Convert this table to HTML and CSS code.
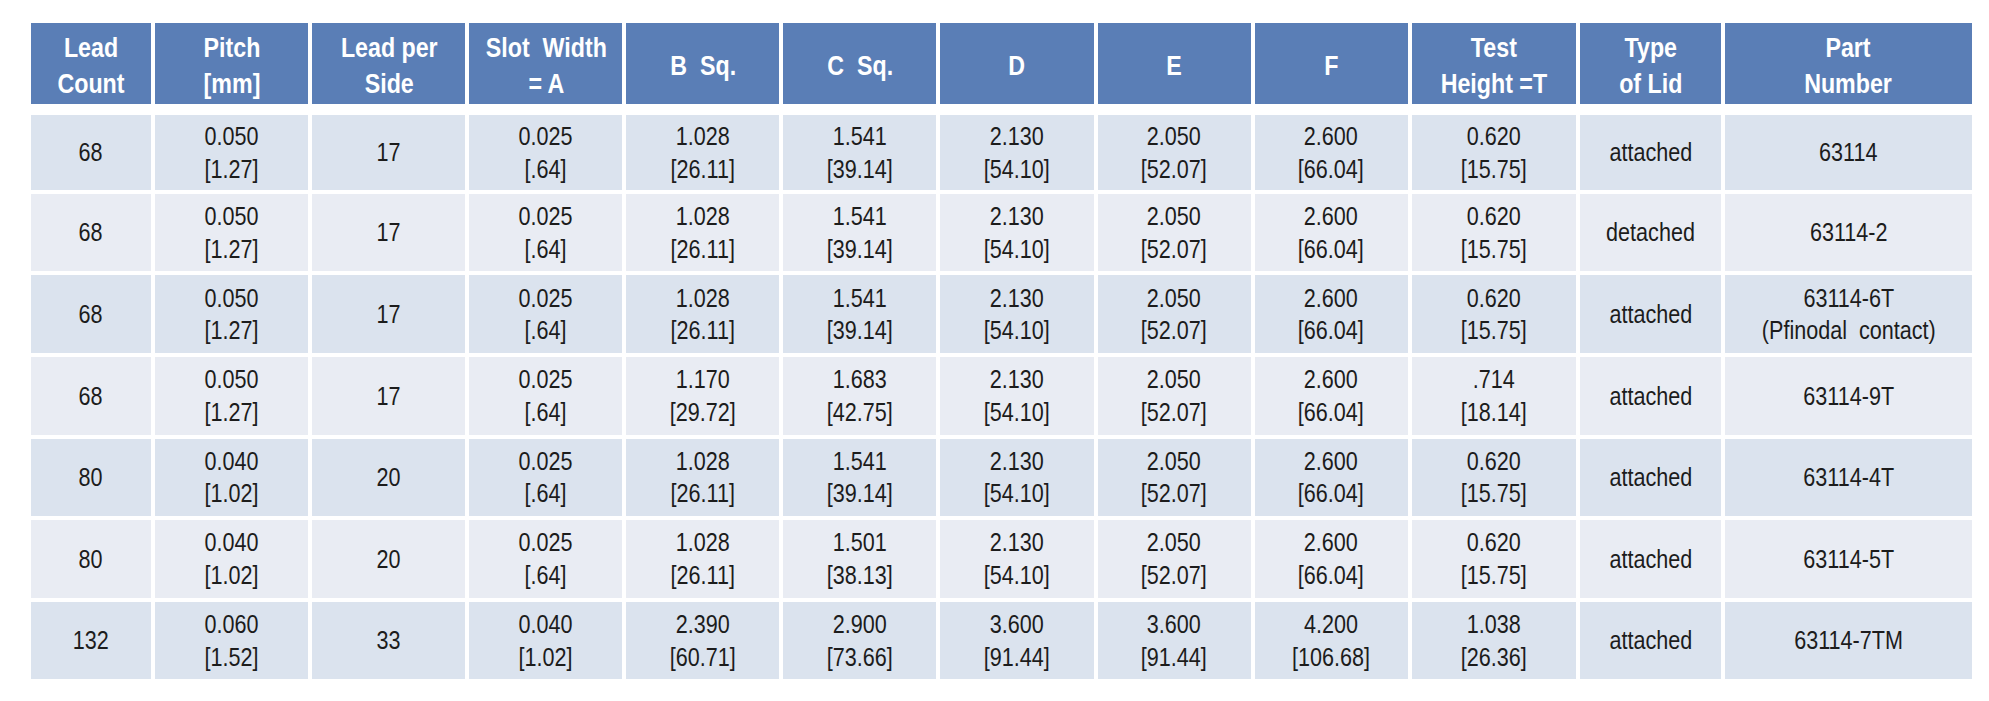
FILE: index.html
```html
<!DOCTYPE html>
<html>
<head>
<meta charset="utf-8">
<link rel="stylesheet" href="styles.css">
</head>
<body>
<table class="spec">
  <colgroup>
    <col class="c-lead"><col class="c-std"><col class="c-std"><col class="c-std"><col class="c-std"><col class="c-std"><col class="c-std"><col class="c-std"><col class="c-std"><col class="c-test"><col class="c-lid"><col class="c-part">
  </colgroup>
  <thead>
    <tr class="head">
      <th><span class="t">Lead<br>Count</span></th>
      <th><span class="t">Pitch<br>[mm]</span></th>
      <th><span class="t">Lead per<br>Side</span></th>
      <th><span class="t">Slot&nbsp; Width<br>= A</span></th>
      <th><span class="t">B&nbsp; Sq.</span></th>
      <th><span class="t">C&nbsp; Sq.</span></th>
      <th><span class="t">D</span></th>
      <th><span class="t">E</span></th>
      <th><span class="t">F</span></th>
      <th><span class="t">Test<br>Height&nbsp;=T</span></th>
      <th><span class="t">Type<br>of Lid</span></th>
      <th><span class="t">Part<br>Number</span></th>
    </tr>
  </thead>
  <tbody>
    <tr class="first">
      <td><span class="t">68</span></td><td><span class="t">0.050<br>[1.27]</span></td><td><span class="t">17</span></td><td><span class="t">0.025<br>[.64]</span></td><td><span class="t">1.028<br>[26.11]</span></td><td><span class="t">1.541<br>[39.14]</span></td><td><span class="t">2.130<br>[54.10]</span></td><td><span class="t">2.050<br>[52.07]</span></td><td><span class="t">2.600<br>[66.04]</span></td><td><span class="t">0.620<br>[15.75]</span></td><td><span class="t">attached</span></td><td><span class="t">63114</span></td>
    </tr>
    <tr>
      <td><span class="t">68</span></td><td><span class="t">0.050<br>[1.27]</span></td><td><span class="t">17</span></td><td><span class="t">0.025<br>[.64]</span></td><td><span class="t">1.028<br>[26.11]</span></td><td><span class="t">1.541<br>[39.14]</span></td><td><span class="t">2.130<br>[54.10]</span></td><td><span class="t">2.050<br>[52.07]</span></td><td><span class="t">2.600<br>[66.04]</span></td><td><span class="t">0.620<br>[15.75]</span></td><td><span class="t">detached</span></td><td><span class="t">63114-2</span></td>
    </tr>
    <tr>
      <td><span class="t">68</span></td><td><span class="t">0.050<br>[1.27]</span></td><td><span class="t">17</span></td><td><span class="t">0.025<br>[.64]</span></td><td><span class="t">1.028<br>[26.11]</span></td><td><span class="t">1.541<br>[39.14]</span></td><td><span class="t">2.130<br>[54.10]</span></td><td><span class="t">2.050<br>[52.07]</span></td><td><span class="t">2.600<br>[66.04]</span></td><td><span class="t">0.620<br>[15.75]</span></td><td><span class="t">attached</span></td><td><span class="t">63114-6T<br>(Pfinodal&nbsp; contact)</span></td>
    </tr>
    <tr>
      <td><span class="t">68</span></td><td><span class="t">0.050<br>[1.27]</span></td><td><span class="t">17</span></td><td><span class="t">0.025<br>[.64]</span></td><td><span class="t">1.170<br>[29.72]</span></td><td><span class="t">1.683<br>[42.75]</span></td><td><span class="t">2.130<br>[54.10]</span></td><td><span class="t">2.050<br>[52.07]</span></td><td><span class="t">2.600<br>[66.04]</span></td><td><span class="t">.714<br>[18.14]</span></td><td><span class="t">attached</span></td><td><span class="t">63114-9T</span></td>
    </tr>
    <tr>
      <td><span class="t">80</span></td><td><span class="t">0.040<br>[1.02]</span></td><td><span class="t">20</span></td><td><span class="t">0.025<br>[.64]</span></td><td><span class="t">1.028<br>[26.11]</span></td><td><span class="t">1.541<br>[39.14]</span></td><td><span class="t">2.130<br>[54.10]</span></td><td><span class="t">2.050<br>[52.07]</span></td><td><span class="t">2.600<br>[66.04]</span></td><td><span class="t">0.620<br>[15.75]</span></td><td><span class="t">attached</span></td><td><span class="t">63114-4T</span></td>
    </tr>
    <tr>
      <td><span class="t">80</span></td><td><span class="t">0.040<br>[1.02]</span></td><td><span class="t">20</span></td><td><span class="t">0.025<br>[.64]</span></td><td><span class="t">1.028<br>[26.11]</span></td><td><span class="t">1.501<br>[38.13]</span></td><td><span class="t">2.130<br>[54.10]</span></td><td><span class="t">2.050<br>[52.07]</span></td><td><span class="t">2.600<br>[66.04]</span></td><td><span class="t">0.620<br>[15.75]</span></td><td><span class="t">attached</span></td><td><span class="t">63114-5T</span></td>
    </tr>
    <tr>
      <td><span class="t">132</span></td><td><span class="t">0.060<br>[1.52]</span></td><td><span class="t">33</span></td><td><span class="t">0.040<br>[1.02]</span></td><td><span class="t">2.390<br>[60.71]</span></td><td><span class="t">2.900<br>[73.66]</span></td><td><span class="t">3.600<br>[91.44]</span></td><td><span class="t">3.600<br>[91.44]</span></td><td><span class="t">4.200<br>[106.68]</span></td><td><span class="t">1.038<br>[26.36]</span></td><td><span class="t">attached</span></td><td><span class="t">63114-7TM</span></td>
    </tr>
  </tbody>
</table>
</body>
</html>
```
FILE: styles.css
```css
html, body {
  margin: 0;
  padding: 0;
  background: #ffffff;
}

body {
  font-family: "Liberation Sans", Arial, sans-serif;
}

.spec {
  margin: 19.4px 0 0 26.5px;
  table-layout: fixed;
  width: 1949px;
  border-collapse: separate;
  border-spacing: 4.5px 4.6px;
}

.c-lead { width: 120.5px; }
.c-std { width: 152.5px; }
.c-test { width: 164px; }
.c-lid { width: 140.5px; }
.c-part { width: 245.5px; }

/* condensed face: Liberation Sans narrowed horizontally */
.t {
  display: inline-block;
  transform-origin: 50% 50%;
}

.spec th {
  background: #5a7eb6;
  background-clip: padding-box;
  color: #ffffff;
  font-weight: bold;
  font-size: 27px;
  line-height: 36px;
  text-align: center;
  vertical-align: middle;
  padding: 5px 0 0 0;
  border-bottom: 7.8px solid #ffffff;
  white-space: nowrap;
}

.spec th .t {
  transform: scaleX(0.86);
}

.head {
  height: 88.1px;
}

.spec td {
  font-size: 26px;
  line-height: 32.5px;
  color: #1c1c1c;
  text-align: center;
  vertical-align: middle;
  padding: 0;
  white-space: nowrap;
}

.spec td .t {
  transform: scaleX(0.83);
}

.spec tbody tr {
  height: 77.6px;
}

.spec tbody tr.first {
  height: 74.3px;
}

.spec tbody tr:nth-child(odd) td {
  background: #dbe3ee;
}

.spec tbody tr:nth-child(even) td {
  background: #e9ecf3;
}
```
